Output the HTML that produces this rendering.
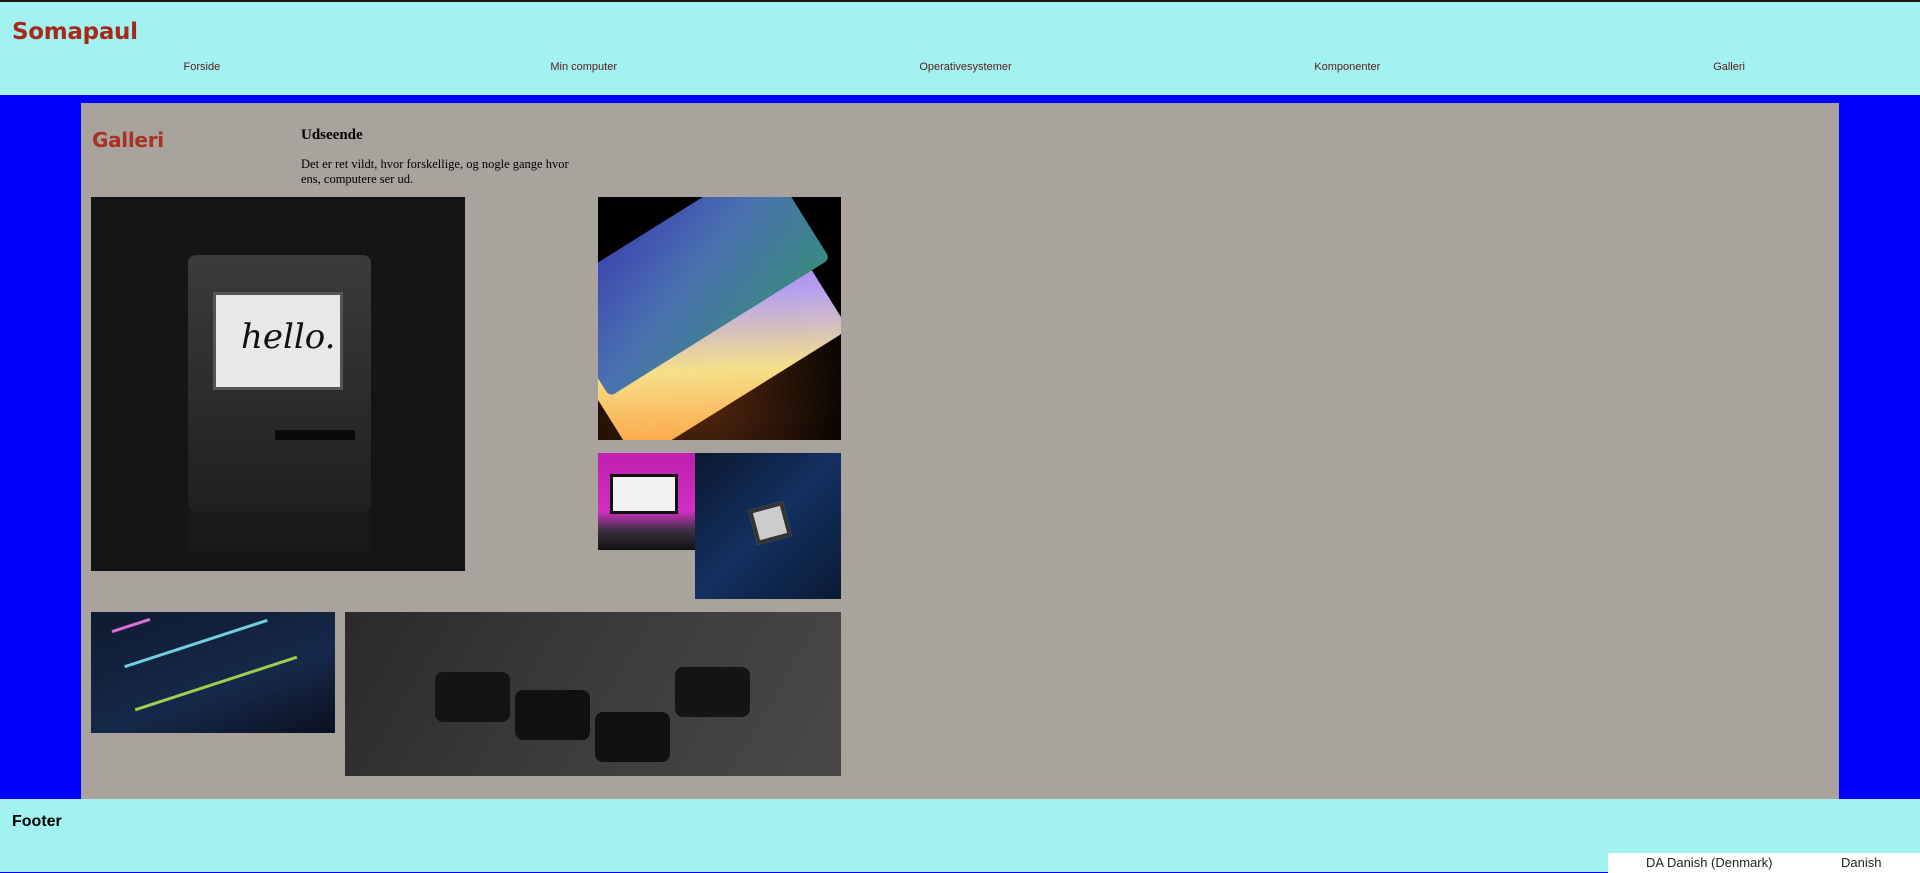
<!DOCTYPE html>
<html><head><meta charset="utf-8"><style>
*{margin:0;padding:0;box-sizing:border-box}
body{width:1920px;height:873px;overflow:hidden;background:#0000ff;position:relative;font-family:"Liberation Sans",Arial,sans-serif}
.top{position:absolute;left:0;top:0;width:1920px;height:2px;background:#1a1a1a}
header{position:absolute;left:0;top:2px;width:1920px;height:93px;background:#a2f2f2}
h1{position:absolute;left:12px;top:17px;font-family:"DejaVu Sans",Verdana,sans-serif;font-size:23px;color:#a52a1a;font-weight:bold;letter-spacing:-0.3px}
nav{position:absolute;left:11px;top:59px;width:1909px;display:flex}
nav a{flex:1;text-align:center;font-size:11px;color:#5a1a1a;text-decoration:none}
main{position:absolute;left:81px;top:103px;width:1758px;height:696px;background:#a8a39d}
.g{position:absolute;left:11px;top:25px;font-family:"DejaVu Sans",Verdana,sans-serif;font-size:20px;font-weight:bold;color:#a8321f;letter-spacing:-0.3px}
.u{position:absolute;left:220px;top:24px;font-family:"Liberation Serif",serif;font-size:15px;font-weight:bold;color:#000}
.p{position:absolute;left:220px;top:54px;width:290px;font-family:"Liberation Serif",serif;font-size:12.5px;line-height:15px;color:#000}
.im{position:absolute;overflow:hidden}
footer{position:absolute;left:0;top:799px;width:1920px;height:73px;background:#a2f2f2}
footer b{position:absolute;left:12px;top:14px;font-size:16px}
.tb{position:absolute;left:1608px;top:853px;width:312px;height:20px;background:#fff;font-size:13px;color:#222}
</style></head><body>
<div class="top"></div>
<header><h1>Somapaul</h1>
<nav><a>Forside</a><a>Min computer</a><a>Operativesystemer</a><a>Komponenter</a><a>Galleri</a></nav></header>
<main>
<div class="g">Galleri</div>
<div class="u">Udseende</div>
<div class="p">Det er ret vildt, hvor forskellige, og nogle gange hvor ens, computere ser ud.</div>
<div class="im" style="left:10px;top:94px;width:374px;height:374px;background:#141516">
 <div style="position:absolute;left:97px;top:58px;width:183px;height:258px;background:linear-gradient(#3a3b3d,#1e1f21);border-radius:8px"></div>
 <div style="position:absolute;left:122px;top:95px;width:130px;height:98px;background:#e8e8e8;border:3px solid #555"></div>
 <div style="position:absolute;left:150px;top:120px;font-family:'DejaVu Serif',serif;font-style:italic;font-size:34px;color:#111">hello.</div>
 <div style="position:absolute;left:184px;top:233px;width:80px;height:10px;background:#0a0a0a"></div>
 <div style="position:absolute;left:97px;top:316px;width:183px;height:38px;background:#18191a"></div>
</div>
<div class="im" style="left:517px;top:94px;width:243px;height:243px;background:radial-gradient(circle at 40% 80%,#5a2a10,#000 70%)">
 <div style="position:absolute;left:-20px;top:60px;width:250px;height:150px;background:linear-gradient(30deg,#ff9a3a,#f5e08a 35%,#b6a0f0 65%,#8a5ae0);transform:rotate(-32deg);border-radius:12px"></div>
 <div style="position:absolute;left:-40px;top:20px;width:260px;height:120px;background:linear-gradient(160deg,#3a3fb0,#4a70b0 50%,#3a8a80);transform:rotate(-32deg);border-radius:6px"></div>
</div>
<div class="im" style="left:517px;top:350px;width:97px;height:97px;background:linear-gradient(#c020b0,#d030c0 60%,#3a3040 80%,#111)">
 <div style="position:absolute;left:12px;top:21px;width:68px;height:40px;background:#f2f2f2;border:3px solid #111"></div>
</div>
<div class="im" style="left:614px;top:350px;width:146px;height:146px;background:linear-gradient(135deg,#0c1830,#133060 50%,#0a1a35)">
 <div style="position:absolute;left:57px;top:52px;width:36px;height:36px;background:#ccc;border:4px solid #333;transform:rotate(-15deg)"></div>
</div>
<div class="im" style="left:10px;top:509px;width:244px;height:121px;background:linear-gradient(160deg,#0e1a30,#16294a 60%,#0a1020)">
 <div style="position:absolute;left:30px;top:30px;width:150px;height:3px;background:#6fd0e0;transform:rotate(-18deg)"></div>
 <div style="position:absolute;left:40px;top:70px;width:170px;height:3px;background:#9ad050;transform:rotate(-18deg)"></div>
 <div style="position:absolute;left:20px;top:12px;width:40px;height:3px;background:#e070d0;transform:rotate(-18deg)"></div>
</div>
<div class="im" style="left:264px;top:509px;width:496px;height:164px;background:linear-gradient(120deg,#2a2a2a,#3c3c3b 50%,#4a4846)">
 <div style="position:absolute;left:170px;top:78px;width:75px;height:50px;background:#111;border-radius:8px"></div>
 <div style="position:absolute;left:250px;top:100px;width:75px;height:50px;background:#111;border-radius:8px"></div>
 <div style="position:absolute;left:90px;top:60px;width:75px;height:50px;background:#141414;border-radius:8px"></div>
 <div style="position:absolute;left:330px;top:55px;width:75px;height:50px;background:#141414;border-radius:8px"></div>
</div>
</main>
<footer><b>Footer</b></footer>
<div style="position:absolute;left:0;top:872px;width:1608px;height:1px;background:#0000ff"></div>
<div class="tb"><span style="position:absolute;left:38px;top:2px">DA Danish (Denmark)</span><span style="position:absolute;left:233px;top:2px">Danish</span></div>
</body></html>
